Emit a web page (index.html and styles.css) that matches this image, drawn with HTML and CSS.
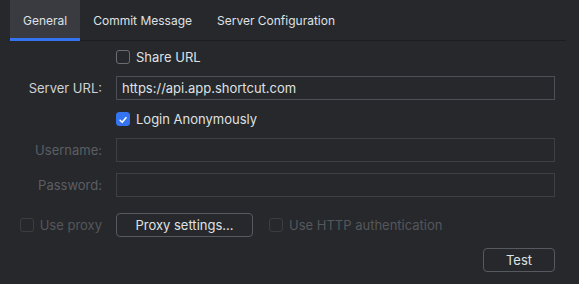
FILE: index.html
```html
<!DOCTYPE html>
<html>
<head>
<meta charset="utf-8">
<link rel="stylesheet" href="styles.css">
</head>
<body>
<div class="tabs">
  <div class="tab active">General</div>
  <div class="tab">Commit Message</div>
  <div class="tab">Server Configuration</div>
</div>
<div class="form">
  <div class="label"></div>
  <label class="check row-a"><span class="box"></span>Share URL</label>

  <div class="label row-b">Server URL:</div>
  <div class="field row-b">https://api.app.shortcut.com</div>

  <div class="label"></div>
  <label class="check row-a"><span class="box checked"><svg viewBox="0 0 14 14" width="14" height="14"><path d="M3.6 7.3 L6 9.7 L10.5 4.3" fill="none" stroke="#fff" stroke-width="1.8" stroke-linecap="round" stroke-linejoin="round"/></svg></span>Login Anonymously</label>

  <div class="label disabled">Username:</div>
  <div class="field disabled-field"></div>

  <div class="label disabled row-pw">Password:</div>
  <div class="field disabled-field row-pw"></div>

  <label class="check disabled proxy-row proxy-label"><span class="box dim"></span>Use proxy</label>
  <div class="proxy-row controls">
    <button class="btn proxy-btn">Proxy settings...</button>
    <label class="check disabled"><span class="box dim"></span>Use HTTP authentication</label>
  </div>

  <div class="label"></div>
  <div class="test-row"><button class="btn test-btn">Test</button></div>
</div>
</body>
</html>
```

FILE: styles.css
```css
html, body {
  margin: 0;
  padding: 0;
  background: #27282b;
  font-family: Inter, "Noto Sans", sans-serif;
  font-size: 13px;
  color: #dfe1e5;
  width: 579px;
  height: 284px;
  overflow: hidden;
}

.tabs {
  display: flex;
  height: 40px;
  margin: 0 13px 0 10px;
  border-bottom: 1px solid #1c1d1f;
  font-size: 12px;
}

.tab {
  height: 40px;
  box-sizing: border-box;
  padding: 1px 12px 0 13px;
  display: flex;
  align-items: center;
  color: #dfe1e5;
  margin-bottom: -1px;
}

.tab.active {
  background: #393b40;
  border-bottom: 3px solid #3574f0;
  padding: 3px 13px 0 13px;
  height: 41px;
}

.form {
  display: grid;
  grid-template-columns: 102px 439px;
  column-gap: 14px;
  row-gap: 7px;
  margin-top: 4px;
}

.label {
  height: 24px;
  display: flex;
  align-items: center;
  justify-content: flex-end;
  color: #cfd2d7;
}

.label.disabled {
  color: #5b5e64;
}

.check {
  height: 24px;
  display: flex;
  align-items: center;
  gap: 6px;
  color: #dfe1e5;
}

.check.disabled {
  color: #54575c;
}

.box {
  width: 14px;
  height: 14px;
  box-sizing: border-box;
  border: 1px solid #6a6d73;
  border-radius: 3px;
  display: inline-flex;
  flex: none;
}

.box.checked {
  background: #3574f0;
  border-color: #3574f0;
}

.box.dim {
  border-color: #3b3d42;
}

.field {
  height: 24px;
  box-sizing: border-box;
  border: 1px solid #4c4f55;
  padding: 0 5px;
  display: flex;
  align-items: center;
  color: #dfe1e5;
}

.disabled-field {
  border-color: #3e4045;
}

.row-pw {
  margin-top: 4px;
}

.proxy-row {
  margin-top: 9px;
}

.proxy-label {
  justify-content: flex-end;
  gap: 6px;
}

.controls {
  display: flex;
  align-items: center;
  gap: 16px;
}

.btn {
  font-family: inherit;
  font-size: 13px;
  color: #dfe1e5;
  background: transparent;
  border: 1px solid #56595f;
  border-radius: 4px;
  height: 24px;
  box-sizing: border-box;
  padding: 0;
  cursor: default;
}

.proxy-btn {
  width: 137px;
}

.test-row {
  display: flex;
  justify-content: flex-end;
  margin-top: 4px;
}

.test-btn {
  width: 72px;
}
```
